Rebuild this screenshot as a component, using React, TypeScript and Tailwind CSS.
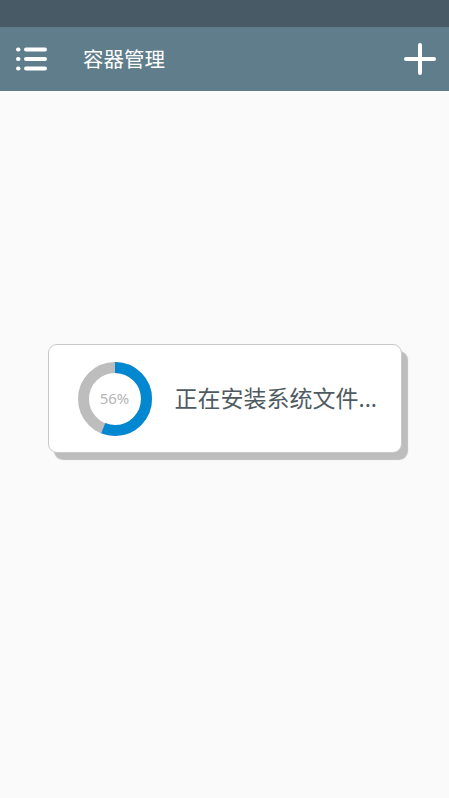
import React from "react";

export default function App() {
  const pct = 56;
  const r = 31.5;
  const c = 2 * Math.PI * r;
  return (
    <div className="w-[449px] h-[798px] bg-[#fafafa] flex flex-col" style={{ fontFamily: '"Noto Sans", "Noto Sans CJK SC", sans-serif' }}>
      <div className="h-[27px] bg-[#475a66]" />
      <div className="h-[64px] bg-[#607d8b] flex items-center pl-[15px] pr-[12px]">
        <svg width="33" height="26" viewBox="0 0 33 26">
          <g fill="#fff">
            <rect x="1" y="1.5" width="4.5" height="4" rx="2" />
            <rect x="1" y="11" width="4.5" height="4" rx="2" />
            <rect x="1" y="20.5" width="4.5" height="4" rx="2" />
            <rect x="9" y="1.5" width="23" height="4" rx="2" />
            <rect x="9" y="11" width="23" height="4" rx="2" />
            <rect x="9" y="20.5" width="23" height="4" rx="2" />
          </g>
        </svg>
        <div className="ml-[35px] text-white text-[20.5px] leading-none">容器管理</div>
        <div className="flex-1" />
        <svg width="34" height="34" viewBox="0 0 34 34">
          <rect x="15" y="1" width="4" height="32" rx="2" fill="#fff" />
          <rect x="1" y="15" width="32" height="4" rx="2" fill="#fff" />
        </svg>
      </div>
      <div className="flex-1 flex flex-col items-center pt-[253px]">
        <div className="w-[354px] h-[109px] bg-white border border-[#c8c8c8] rounded-[9px] shadow-[6px_7px_1px_#bdbdbd] flex items-center pl-[28px]">
          <div className="relative w-[76px] h-[76px]">
            <svg width="76" height="76" viewBox="0 0 76 76">
              <circle cx="38" cy="38" r={r} fill="none" stroke="#bdbdbd" strokeWidth="11" />
              <circle
                cx="38"
                cy="38"
                r={r}
                fill="none"
                stroke="#0288d1"
                strokeWidth="11"
                strokeDasharray={`${(c * pct) / 100} ${c}`}
                transform="rotate(-90 38 38)"
              />
            </svg>
            <div className="absolute inset-0 flex items-center justify-center text-[15px] text-[#b5b5b5]">56%</div>
          </div>
          <div className="ml-[22px] text-[23px] text-[#4f5b62] leading-none">正在安装系统文件...</div>
        </div>
      </div>
    </div>
  );
}
